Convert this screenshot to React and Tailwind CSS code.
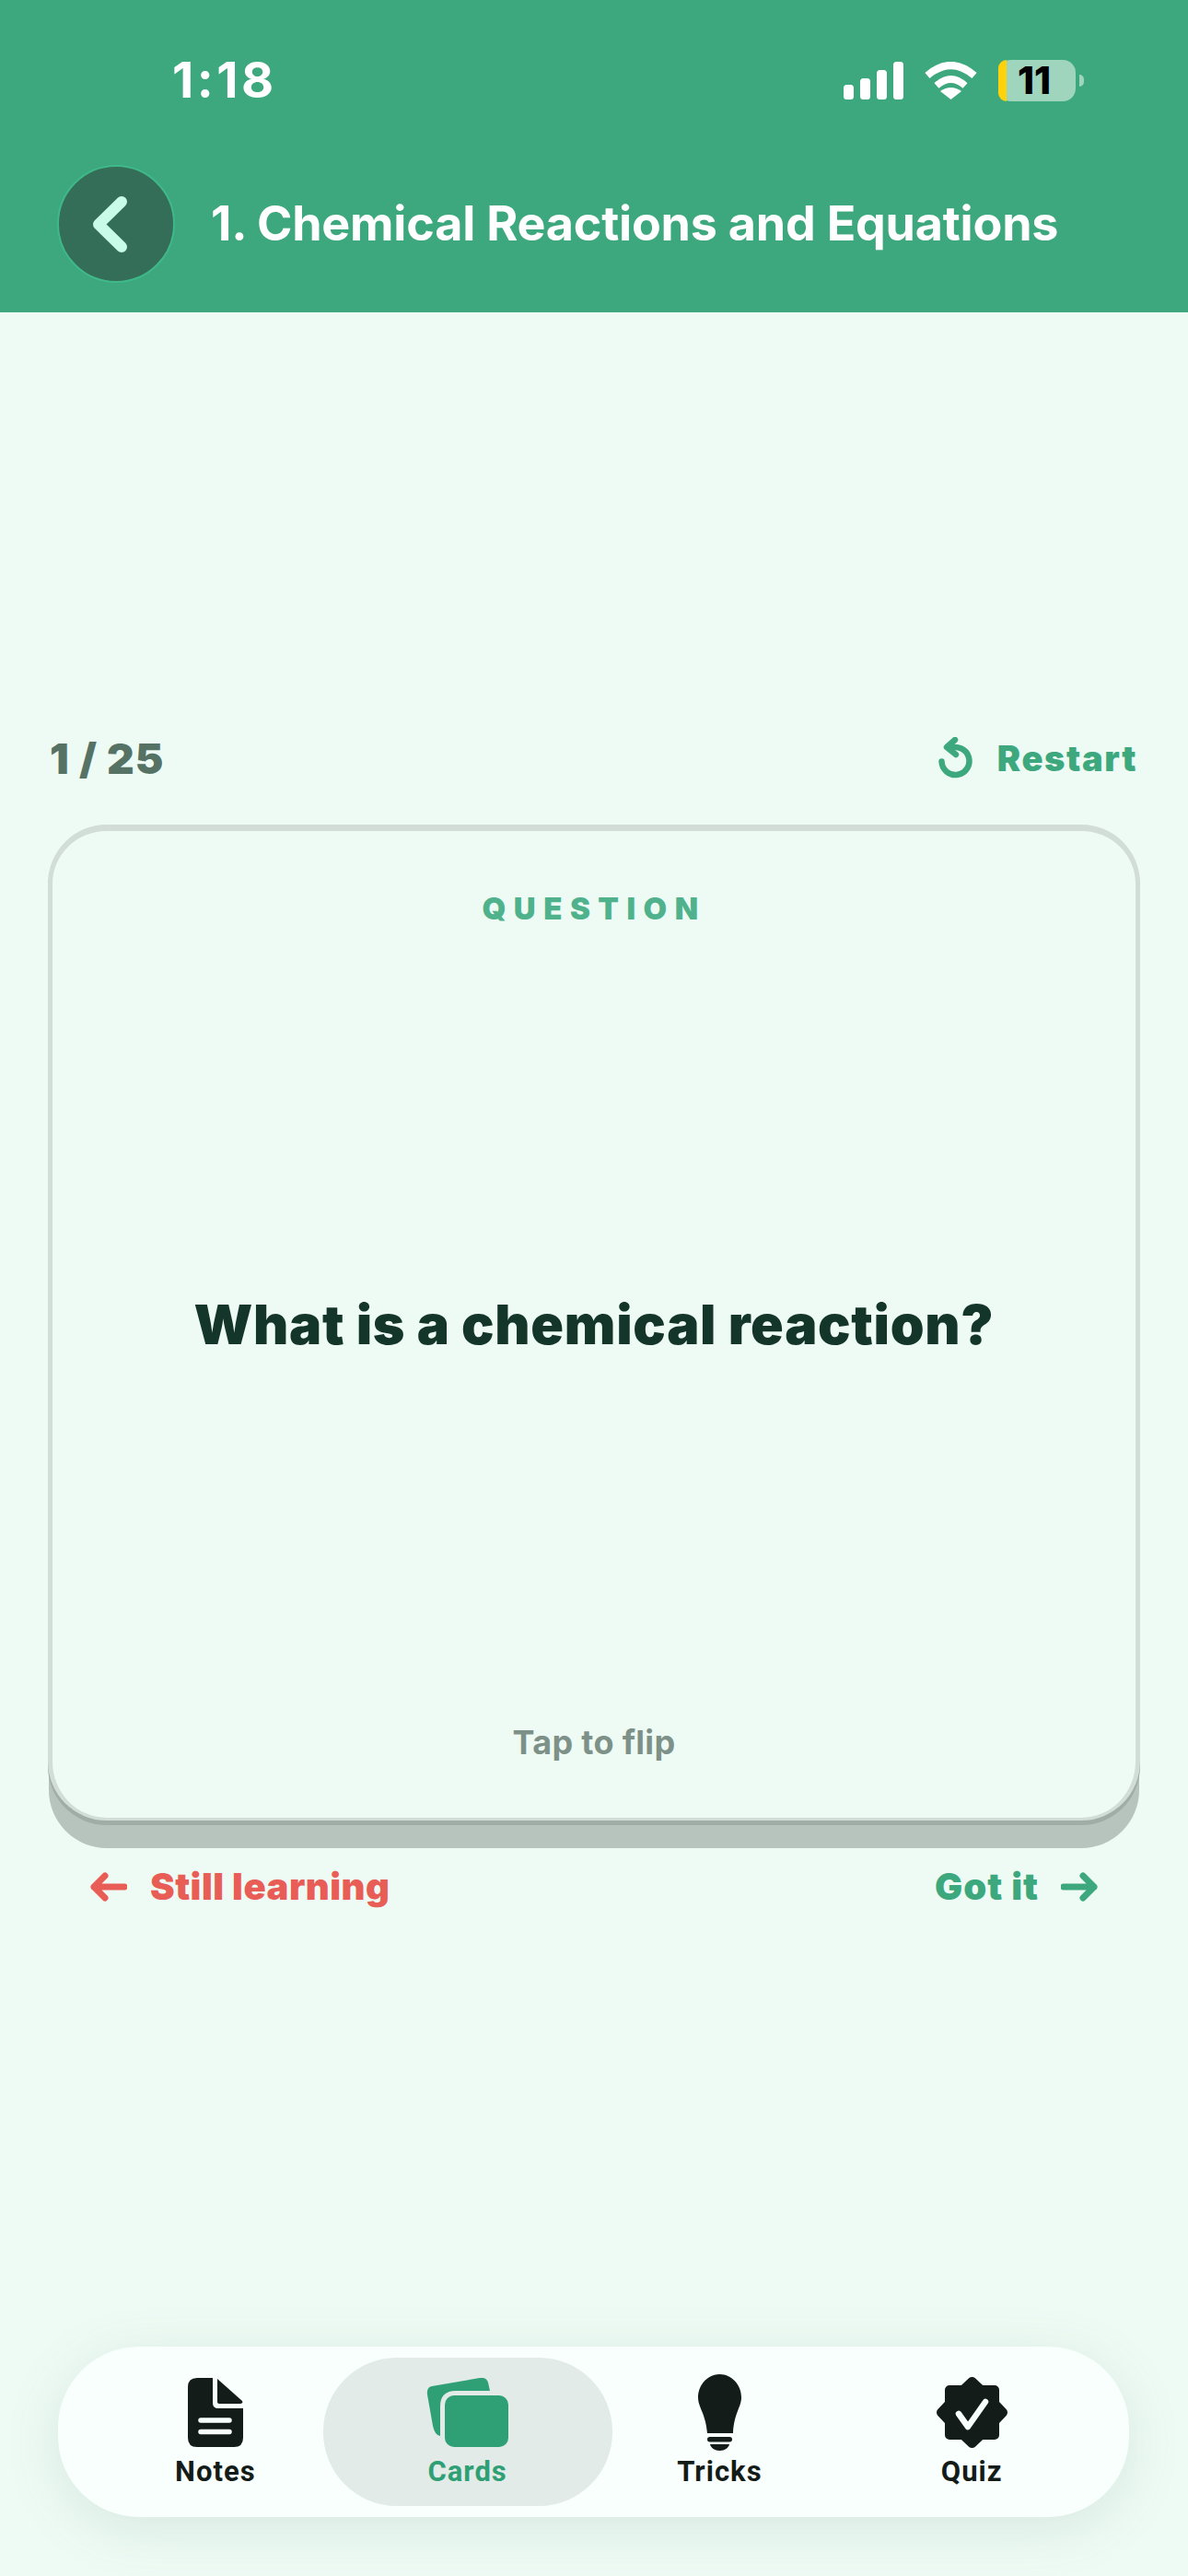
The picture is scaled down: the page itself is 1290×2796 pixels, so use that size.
import React from "react";

const TABS = ["Notes", "Cards", "Tricks", "Quiz"];

function SignalBars() {
  return (
    <svg width="65" height="41" viewBox="0 0 65 41" fill="#fff">
      <rect x="0" y="25" width="11" height="16" rx="3.5" />
      <rect x="18" y="18" width="11" height="23" rx="3.5" />
      <rect x="36" y="9" width="11" height="32" rx="3.5" />
      <rect x="54" y="0" width="11" height="41" rx="3.5" />
    </svg>
  );
}

function Wifi() {
  return (
    <svg width="57" height="41" viewBox="0 0 57 41" fill="none">
      <path d="M3 15Q28.5-7 54 15" stroke="#fff" strokeWidth="8" />
      <path d="M13 26Q28.5 12 44 26" stroke="#fff" strokeWidth="7.5" />
      <path d="M28.500 41L17 32Q28.500 24 40 32Z" fill="#fff" />
    </svg>
  );
}

function Battery() {
  return (
    <div className="flex items-center gap-[4px]">
      <div className="flex h-[45px] w-[84px] items-center rounded-[14px] bg-[#9fd4bd]">
        <div className="h-full w-[9px] rounded-l-[14px] bg-[#fdd20a]" />
        <span className="ml-[12px] text-[41px] leading-[45px] font-extrabold text-black">11</span>
      </div>
      <div className="h-[13px] w-[5px] rounded-r-full bg-[#9fd4bd]" />
    </div>
  );
}

function NotesIcon() {
  return (
    <svg width="60" height="75" viewBox="0 0 60 75" fill="#141c19">
      <path d="M10 0H27V27Q27 33 33 33H60V65Q60 75 50 75H10Q0 75 0 65V10Q0 0 10 0Z" />
      <path d="M32 1L59 25Q60 28 57 28H34Q32 28 32 26Z" />
      <path d="M14 46H45M14 58.500H45" stroke="#f8fffc" strokeWidth="5.500" strokeLinecap="round" />
    </svg>
  );
}

function CardsIcon() {
  return (
    <svg width="89" height="75" viewBox="0 0 89 75" fill="#2f9f75">
      <path d="M6 9L58 0Q65-1 67 5L69 14H32Q15 14 15 31V63Q9 62 7 52L1 18Q0 10 6 9Z" />
      <rect x="20" y="19" width="69" height="56" rx="10" />
    </svg>
  );
}

function BulbIcon() {
  return (
    <svg width="47" height="83" viewBox="0 0 47 83" fill="#141c19">
      <path d="M23.500 0C36 0 47 11 47 25C47 36 39 42 38 64H10C8 42 0 36 0 25C0 11 11 0 23.500 0Z" />
      <rect x="10" y="68" width="27" height="5.500" rx="2.750" />
      <path d="M13 76H34C33 80 29 83 23.500 83C18 83 14 80 13 76Z" />
    </svg>
  );
}

function QuizIcon() {
  return (
    <svg width="79" height="79" viewBox="0 0 79 79">
      <polygon
        points="39.500,6 49,15 64,15 64,30 73,39.500 64,49 64,64 49,64 39.500,73 30,64 15,64 15,49 6,39.500 15,30 15,15 30,15"
        fill="#141c19"
        stroke="#141c19"
        strokeWidth="10"
        strokeLinejoin="round"
      />
      <path d="M25 41L35 55L54 28" fill="none" stroke="#f8fffc" strokeWidth="6.500" strokeLinecap="round" strokeLinejoin="round" />
    </svg>
  );
}

function RestartIcon() {
  return (
    <svg width="40" height="46" viewBox="0 0 40 46" fill="none" stroke="#3da87d" strokeWidth="6.500" strokeLinecap="round" strokeLinejoin="round">
      <path d="M12 12.500A15 15 0 1 1 3.500 26.500" />
      <path d="M18 3L9 11L19 19" />
    </svg>
  );
}

function ArrowLeft({ color }) {
  return (
    <svg width="40" height="32" viewBox="0 0 40 32" fill="none" stroke={color} strokeWidth="7" strokeLinecap="round" strokeLinejoin="round">
      <path d="M37 16H4M16 4L4 16L16 28" />
    </svg>
  );
}

function ArrowRight({ color }) {
  return (
    <svg width="40" height="32" viewBox="0 0 40 32" fill="none" stroke={color} strokeWidth="7" strokeLinecap="round" strokeLinejoin="round">
      <path d="M3 16H36M24 4L36 16L24 28" />
    </svg>
  );
}

const ICONS = {
  Notes: NotesIcon,
  Cards: CardsIcon,
  Tricks: BulbIcon,
  Quiz: QuizIcon,
};

function TabBar() {
  return (
    <nav className="mx-[63px] mb-[64px] grid h-[185px] w-[1163px] grid-cols-4 rounded-[88px] bg-[#f8fffc] py-[12px] px-[34px] shadow-[0_12px_60px_rgba(60,110,90,0.13)]">
      {TABS.map((name) => {
        const Icon = ICONS[name];
        const active = name === "Cards";
        return (
          <div
            key={name}
            className={
              active
                ? "-mx-[20px] flex flex-col items-center rounded-[80px] bg-[#e2ebe7]"
                : "flex flex-col items-center"
            }
          >
            <div className="mt-[15px] flex h-[88px] items-center justify-center">
              <Icon />
            </div>
            <span
              className={
                active
                  ? "mt-[1px] font-['Roboto'] text-[31px] leading-[40px] font-bold tracking-[1px] text-[#2f9f75]"
                  : "mt-[1px] font-['Roboto'] text-[31px] leading-[40px] font-bold tracking-[1px] text-[#141c19]"
              }
            >
              {name}
            </span>
          </div>
        );
      })}
    </nav>
  );
}

export default function App() {
  return (
    <div className="flex h-[2796px] w-[1290px] flex-col bg-[#eefbf4] font-['Inter','Noto_Sans',sans-serif]">
      {/* header with status bar */}
      <header className="h-[339px] bg-[#3da87d] text-white">
        <div className="mt-[55px] flex h-[64px] items-center justify-between pr-[113px] pl-[187px]">
          <span className="text-[54px] leading-none font-bold tracking-[3.5px]">1:18</span>
          <div className="flex items-center gap-[23px]">
            <SignalBars />
            <Wifi />
            <Battery />
          </div>
        </div>
        <div className="mt-[60px] flex items-center gap-[39px] pl-[62px]">
          <button className="flex h-[128px] w-[128px] items-center justify-center rounded-full border-2 border-[#3fb88a] bg-[#346d58] pr-[13px]">
            <svg width="37" height="61" viewBox="0 0 37 61" fill="none" stroke="#c8fbe8" strokeWidth="12" strokeLinecap="round" strokeLinejoin="round">
              <path d="M31 6L6 30.500L31 55" />
            </svg>
          </button>
          <h1 className="text-[52px] leading-none font-bold tracking-[-0.2px]">
            1. Chemical Reactions and Equations
          </h1>
        </div>
      </header>

      <main className="flex flex-1 flex-col px-[52px]">
        <div className="mt-[458px] flex items-center justify-between pl-[2px]">
          <span className="text-[46px] leading-[52px] font-black tracking-[1px] text-[#557265]">1 / 25</span>
          <button className="flex items-center gap-[24px] pr-[3px]">
            <RestartIcon />
            <span className="text-[38px] leading-[52px] font-black tracking-[1.6px] text-[#3da87d]">Restart</span>
          </button>
        </div>

        {/* flash card */}
        <div className="mt-[46px] flex h-[1081px] w-[1186px] flex-col items-center rounded-[64px] border-[5px] border-t-[7px] border-b-[3px] border-[#d1ddd6] bg-[#eefbf4] shadow-[0_5px_0_#9fada6,0_31px_0_-1px_#b7c4bd]">
          <span className="mt-[64px] text-[33px] leading-[40px] font-black tracking-[8.5px] text-[#4fb28c]">
            QUESTION
          </span>
          <div className="flex flex-1 items-center justify-center">
            <p className="text-[59px] leading-[70px] font-black tracking-[0.7px] text-[#14352a]">
              What is a chemical reaction?
            </p>
          </div>
          <span className="mb-[60px] text-[36px] leading-[44px] font-bold tracking-[0.3px] text-[#7e9188]">Tap to flip</span>
        </div>

        <div className="mt-[48px] flex items-center justify-between px-[46px]">
          <div className="flex items-center gap-[25px]">
            <ArrowLeft color="#e85d55" />
            <span className="text-[40px] leading-[48px] font-black tracking-[0.5px] text-[#e85d55]">Still learning</span>
          </div>
          <div className="flex items-center gap-[24px]">
            <span className="text-[40px] leading-[48px] font-black tracking-[1px] text-[#3da87d]">Got it</span>
            <ArrowRight color="#3da87d" />
          </div>
        </div>
      </main>

      <TabBar />
    </div>
  );
}
